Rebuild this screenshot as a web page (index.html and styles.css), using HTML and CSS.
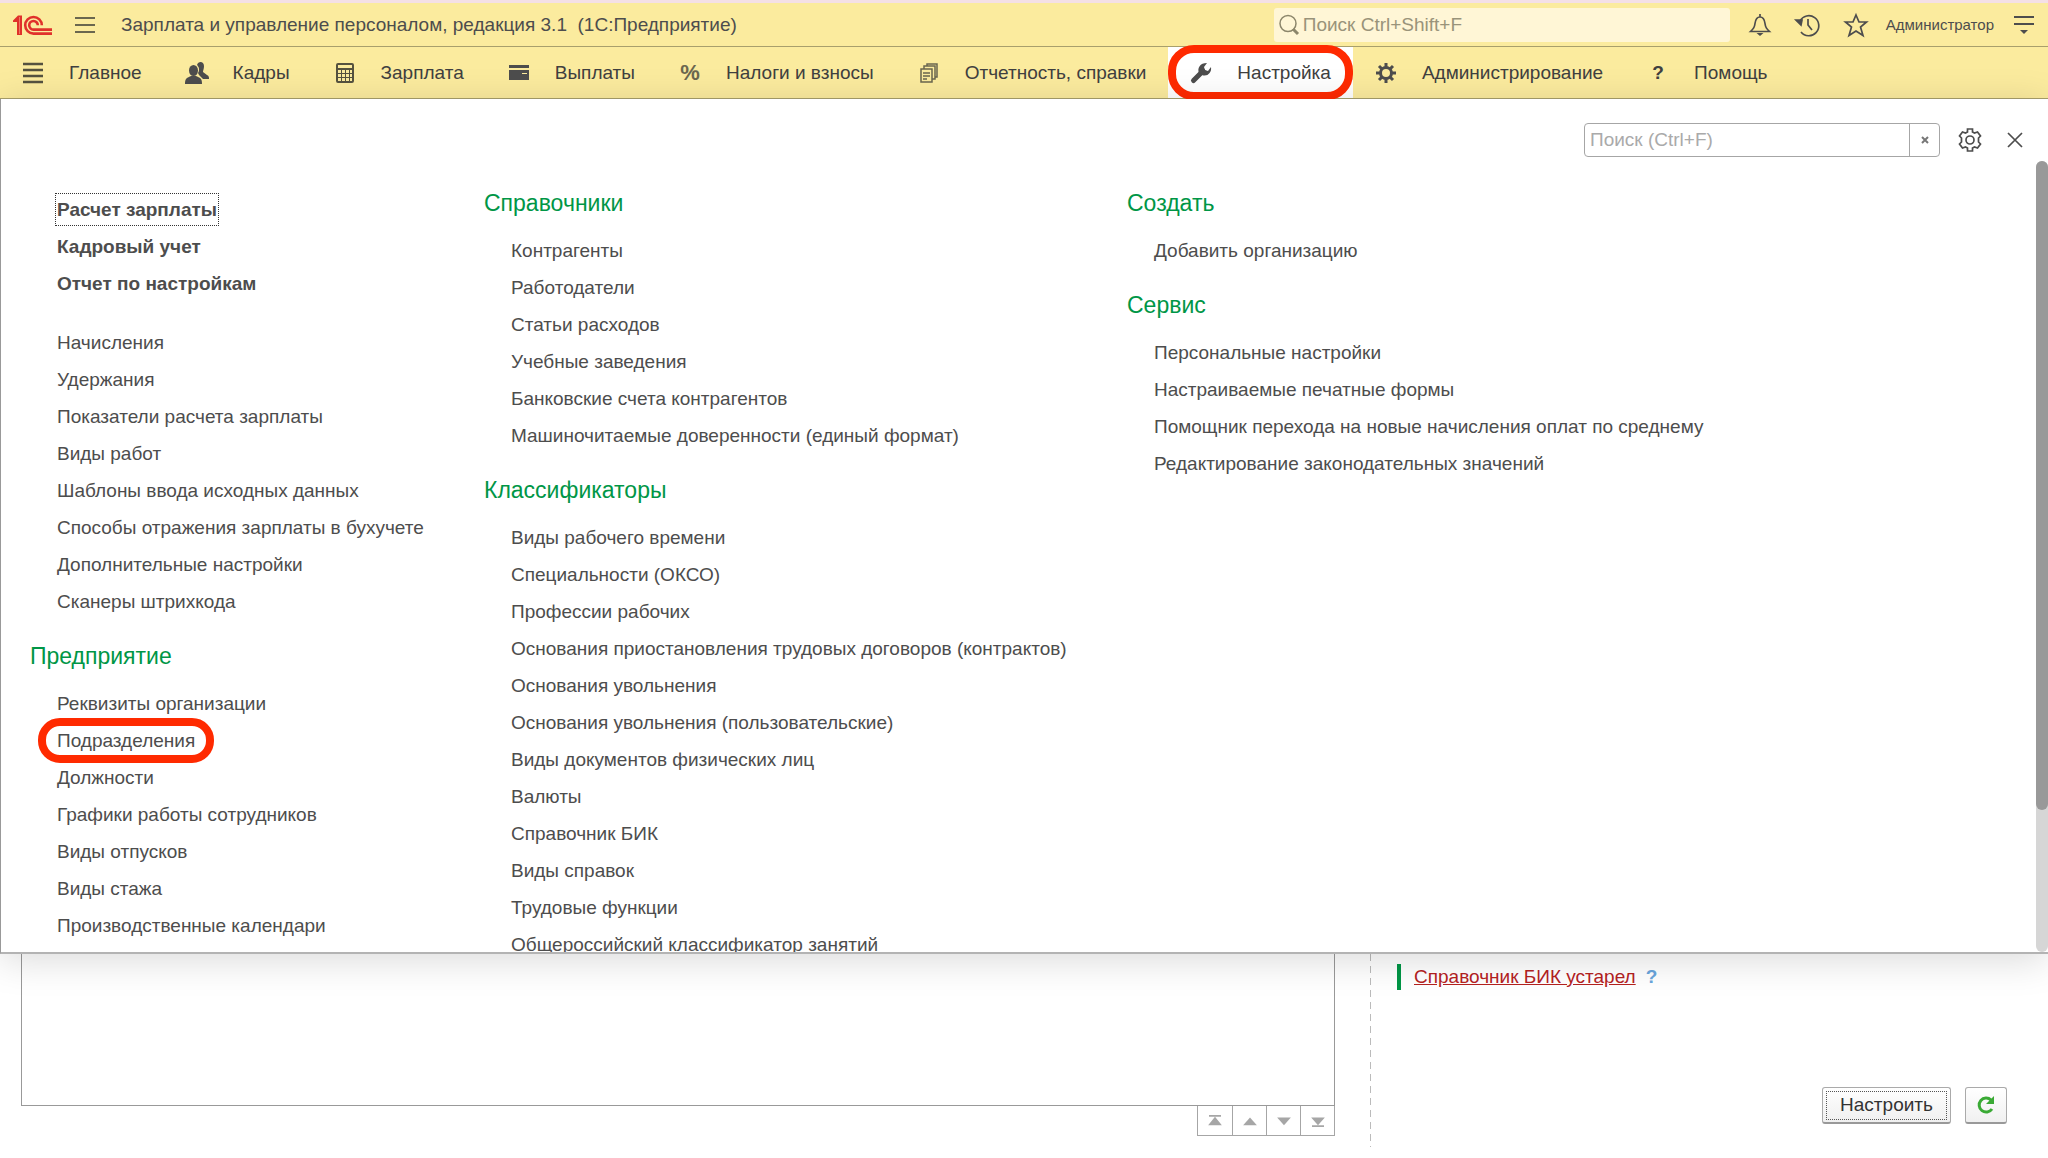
FILE: index.html
```html
<!DOCTYPE html>
<html lang="ru">
<head>
  <meta charset="UTF-8" />
  <meta name="viewport" content="width=device-width, initial-scale=1.0"/>
  <title>Зарплата и управление персоналом</title>
  <link rel="stylesheet" href="styles.css">
</head>
<body>
  <header class="titlebar">
    <svg class="logo" width="40" height="22" viewBox="0 0 40 22" fill="none" stroke="#e0312b">
      <path d="M0 6.500L5 1.500h4V21H4V8H0z" fill="#e0312b" stroke="none"/>
      <path d="M6.500 3v17" stroke="#f3a78a" stroke-width="0.600"/>
      <path d="M39 19.600H20.500a8.300 8.300 0 1 1 8.300-8.300" stroke-width="2.600"/>
      <path d="M39 15.600H20.500a4.300 4.300 0 1 1 4.300-4.300" stroke-width="2.600"/>
    </svg>
    <button class="icon-btn menu-btn" aria-label="Главное меню">
      <svg width="20" height="18" viewBox="0 0 20 18" stroke="#6b674f" stroke-width="2"><path d="M0 2h20M0 9h20M0 16h20"/></svg>
    </button>
    <h1>Зарплата и управление персоналом, редакция 3.1&nbsp; (1С:Предприятие)</h1>
    <label class="global-search">
      <svg width="22" height="22" viewBox="0 0 22 22" fill="none" stroke="#8c866b"><circle cx="10" cy="9.500" r="8" stroke-width="1.500"/><path d="M15 15l5 5" stroke-width="3"/></svg>
      <input type="text" placeholder="Поиск Ctrl+Shift+F" aria-label="Поиск">
    </label>
    <div class="tools">
      <button class="icon-btn" aria-label="Оповещения">
        <svg width="24" height="24" viewBox="0 0 24 24" fill="none" stroke="#4d4d4d" stroke-width="1.700"><path d="M2.500 18.500c3-3 4-4 4.500-8 .5-4 2-6.500 5-6.500s4.500 2.500 5 6.500c.5 4 1.500 5 4.500 8zM12 1v3"/><path d="M8.500 20h7L12 23z" fill="#4d4d4d" stroke="none"/></svg>
      </button>
      <button class="icon-btn" aria-label="История">
        <svg width="24" height="24" viewBox="0 0 24 24" fill="none" stroke="#4d4d4d" stroke-width="1.700"><path d="M4 8a10 10 0 1 1 1 11M12 6v6l4 5"/><path d="M0 7h6l-1 5z" fill="#4d4d4d" stroke="#4d4d4d"/></svg>
      </button>
      <button class="icon-btn" aria-label="Избранное">
        <svg width="24" height="24" viewBox="0 0 24 24" fill="none" stroke="#4d4d4d" stroke-width="1.700"><path d="M12 2l3 7h7.500l-6 5 2.500 8.500-7-4.500-7 4.500L7.500 14l-6-5H9z"/></svg>
      </button>
    </div>
    <a class="user" href="#">Администратор</a>
    <button class="icon-btn" aria-label="Настройка панели">
      <svg width="20" height="20" viewBox="0 0 20 20" stroke="#4d4d4d" stroke-width="2"><path d="M0 2h20M0 9h20"/><path d="M6 15h8l-4 4z" fill="#4d4d4d" stroke="none"/></svg>
    </button>
  </header>

  <nav class="sections">
    <a href="#"><span class="icon"><svg width="20" height="20" viewBox="0 0 20 20" stroke="#55523f" stroke-width="2.500"><path d="M0 1h20M0 7h20M0 13h20M0 19h20"/></svg></span>Главное</a>
    <a href="#"><span class="icon"><svg width="24" height="22" viewBox="0 0 24 22" fill="#4d4d4d"><path d="M12 3c1-4 7-4 7 1 0 3-1 4-1 6l4 3c2 1 2 2 2 4h-6l-4-4-1-2c2-3 1-6-1-8z"/><ellipse cx="8.500" cy="8.500" rx="4.500" ry="5.500"/><path d="M0 22c0-5 1-6 6-8h5c5 2 6 3 6 8z"/></svg></span>Кадры</a>
    <a href="#"><span class="icon"><svg width="18" height="20" viewBox="0 0 18 20" fill="none" stroke="#55523f"><rect x="1" y="1" width="16" height="18" rx="1" stroke-width="2"/><path d="M1 6h16" stroke-width="2"/><path d="M1 10.500h16M1 14.500h16M5.500 6v13M9.500 6v13M13.500 6v13"/></svg></span>Зарплата</a>
    <a href="#"><span class="icon"><svg width="20" height="15" viewBox="0 0 20 15" fill="#4d4d4d"><path d="M0 0h20v3H0zM0 5h20v10H0z"/><path d="M13 8.500h5" stroke="#fbeb9e"/></svg></span>Выплаты</a>
    <a href="#"><b class="icon percent">%</b>Налоги и взносы</a>
    <a href="#"><span class="icon"><svg width="18" height="20" viewBox="0 0 18 20" fill="none" stroke="#6b674f" stroke-width="1.500"><path d="M1 6h11v13H1zM4 6V3h11v13h-3M7 3V1h10v13h-2M3 10h7M3 13h7M3 16h4"/></svg></span>Отчетность, справки</a>
    <a href="#" class="active"><span class="icon"><svg width="22" height="22" viewBox="0 0 22 22"><path d="M3.500 18.500L13 9" stroke="#4d4d4d" stroke-width="5" stroke-linecap="round"/><path d="M9 11c-2-5 1-10 8-10l-3 4 1 3 3 1 3-4c1 6-4 10-9 8z" fill="#4d4d4d"/></svg></span>Настройка</a>
    <a href="#"><span class="icon"><svg width="20" height="20" viewBox="0 0 20 20" fill="none" stroke="#4d4d4d" stroke-width="3"><circle cx="10" cy="10" r="5.500"/><path d="M10 0v4M10 16v4M0 10h4M16 10h4M3 3l3 3M14 14l3 3M3 17l3-3M14 6l3-3"/></svg></span>Администрирование</a>
    <a href="#"><b class="icon">?</b>Помощь</a>
  </nav>

  <section class="panel">
    <div class="panel-tools">
      <div class="panel-search">
        <input type="text" placeholder="Поиск (Ctrl+F)" aria-label="Поиск по разделу">
        <button aria-label="Очистить"><svg width="8" height="8" viewBox="0 0 8 8" stroke="#777" stroke-width="2"><path d="M1 1l6 6M7 1L1 7"/></svg></button>
      </div>
      <button class="icon-btn settings" aria-label="Настройки">
        <svg width="24" height="24" viewBox="0 0 24 24" fill="none" stroke="#4d4d4d" stroke-width="1.700"><circle cx="12" cy="12" r="4"/><path d="M9.500 4V1h5v3l2 1 3-1 3 4-2 2v4l2 2-3 4-3-1-2 1v3h-5v-3l-2-1-3 1-3-4 2-2v-4l-2-2 3-4 3 1z"/></svg>
      </button>
      <button class="icon-btn" aria-label="Закрыть">
        <svg width="14" height="14" viewBox="0 0 14 14" stroke="#4d4d4d" stroke-width="1.700"><path d="M0 0l14 14M14 0L0 14"/></svg>
      </button>
    </div>

    <div class="columns">
      <div class="column first">
        <ul class="main-links">
          <li><a href="#" class="focused">Расчет зарплаты</a></li>
          <li><a href="#">Кадровый учет</a></li>
          <li><a href="#">Отчет по настройкам</a></li>
        </ul>
        <ul>
          <li><a href="#">Начисления</a></li>
          <li><a href="#">Удержания</a></li>
          <li><a href="#">Показатели расчета зарплаты</a></li>
          <li><a href="#">Виды работ</a></li>
          <li><a href="#">Шаблоны ввода исходных данных</a></li>
          <li><a href="#">Способы отражения зарплаты в бухучете</a></li>
          <li><a href="#">Дополнительные настройки</a></li>
          <li><a href="#">Сканеры штрихкода</a></li>
        </ul>
        <h2>Предприятие</h2>
        <ul>
          <li><a href="#">Реквизиты организации</a></li>
          <li><a href="#" class="marked">Подразделения</a></li>
          <li><a href="#">Должности</a></li>
          <li><a href="#">Графики работы сотрудников</a></li>
          <li><a href="#">Виды отпусков</a></li>
          <li><a href="#">Виды стажа</a></li>
          <li><a href="#">Производственные календари</a></li>
        </ul>
      </div>

      <div class="column second">
        <h2>Справочники</h2>
        <ul>
          <li><a href="#">Контрагенты</a></li>
          <li><a href="#">Работодатели</a></li>
          <li><a href="#">Статьи расходов</a></li>
          <li><a href="#">Учебные заведения</a></li>
          <li><a href="#">Банковские счета контрагентов</a></li>
          <li><a href="#">Машиночитаемые доверенности (единый формат)</a></li>
        </ul>
        <h2>Классификаторы</h2>
        <ul>
          <li><a href="#">Виды рабочего времени</a></li>
          <li><a href="#">Специальности (ОКСО)</a></li>
          <li><a href="#">Профессии рабочих</a></li>
          <li><a href="#">Основания приостановления трудовых договоров (контрактов)</a></li>
          <li><a href="#">Основания увольнения</a></li>
          <li><a href="#">Основания увольнения (пользовательские)</a></li>
          <li><a href="#">Виды документов физических лиц</a></li>
          <li><a href="#">Валюты</a></li>
          <li><a href="#">Справочник БИК</a></li>
          <li><a href="#">Виды справок</a></li>
          <li><a href="#">Трудовые функции</a></li>
          <li><a href="#">Общероссийский классификатор занятий</a></li>
        </ul>
      </div>

      <div class="column third">
        <h2>Создать</h2>
        <ul>
          <li><a href="#">Добавить организацию</a></li>
        </ul>
        <h2>Сервис</h2>
        <ul>
          <li><a href="#">Персональные настройки</a></li>
          <li><a href="#">Настраиваемые печатные формы</a></li>
          <li><a href="#">Помощник перехода на новые начисления оплат по среднему</a></li>
          <li><a href="#">Редактирование законодательных значений</a></li>
        </ul>
      </div>
      <div class="scrollbar"><div class="thumb"></div></div>
    </div>
  </section>

  <main class="desktop">
    <div class="list-side">
      <div class="list-box"></div>
      <div class="pager">
        <button aria-label="В начало"><svg width="14" height="12" viewBox="0 0 16 14" fill="#a6a6a6"><path d="M1 0h14v2H1zM8 2l8 10H0z"/></svg></button>
        <button aria-label="Вверх"><svg width="14" height="12" viewBox="0 0 16 14" fill="#a6a6a6"><path d="M8 3l8 9H0z"/></svg></button>
        <button aria-label="Вниз"><svg width="14" height="12" viewBox="0 0 16 14" fill="#a6a6a6"><path d="M8 12l8-9H0z"/></svg></button>
        <button aria-label="В конец"><svg width="14" height="12" viewBox="0 0 16 14" fill="#a6a6a6"><path d="M1 12h14v2H1zM8 12l8-9H0z"/></svg></button>
      </div>
    </div>
    <div class="info-side">
      <div class="notice"><a href="#">Справочник БИК устарел</a><button class="help">?</button></div>
      <div class="actions">
        <button class="btn setup">Настроить</button>
        <button class="btn refresh" aria-label="Обновить"><svg width="20" height="20" viewBox="0 0 20 20"><path d="M15 5a7 7 0 1 0 1 9" fill="none" stroke="#3aaa35" stroke-width="3"/><path d="M18 1v8h-8z" fill="#3aaa35"/></svg></button>
      </div>
    </div>
  </main>
</body>
</html>
```
FILE: styles.css
```css
* {
  box-sizing: border-box;
}

body {
  margin: 0;
  height: 100vh;
  display: flex;
  flex-direction: column;
  overflow: hidden;
  font-family: "Liberation Sans", Arial, sans-serif;
  font-size: 19px;
  color: #4d4d4d;
  background: #fff;
}

a {
  color: inherit;
  text-decoration: none;
}

button, input {
  font: inherit;
  color: inherit;
}

svg {
  display: block;
  flex: none;
  overflow: visible;
}

ul {
  list-style: none;
  margin: 0;
  padding: 0;
}

.icon-btn {
  padding: 0;
  border: none;
  background: none;
}

/* title bar */
.titlebar {
  flex: none;
  display: flex;
  align-items: center;
  height: 47px;
  padding: 0 14px 0 13px;
  background: #fbeb9e;
  border-top: 3px solid #f4e0e6;
  border-bottom: 1px solid #a89f6c;
}

.menu-btn {
  margin: 0 26px 0 22px;
}

h1 {
  flex: 1;
  margin: 0;
  font-size: 19px;
  font-weight: normal;
  white-space: nowrap;
}

.global-search {
  display: flex;
  align-items: center;
  width: 456px;
  height: 34px;
  padding: 0 4px;
  background: #fff6d6;
  border-radius: 3px;
}

.global-search input {
  flex: 1;
  min-width: 0;
  padding: 0 3px;
  border: none;
  background: none;
}

.global-search input::placeholder {
  color: #99937a;
}

.tools {
  display: flex;
  gap: 24px;
  margin: 0 18px;
}

.user {
  margin-right: 20px;
  font-size: 15px;
}

/* sections */
.sections {
  flex: none;
  display: flex;
  height: 52px;
  background: #fbeb9e;
  border-bottom: 1px solid #a89f6c;
}

.sections a {
  display: flex;
  align-items: center;
  gap: 25px;
  padding: 0 22px;
  white-space: nowrap;
  color: #404040;
}

.sections .active {
  position: relative;
  background: #fff;
}

.sections .active::after {
  content: "";
  position: absolute;
  inset: -2px 0;
  border: 8px solid #ff2a00;
  border-radius: 26px;
}

.icon {
  display: flex;
  justify-content: center;
  width: 22px;
}

.percent {
  font-size: 22px;
  color: #6b674f;
}

/* function panel */
.panel {
  position: relative;
  z-index: 1;
  flex: 1;
  min-height: 0;
  display: flex;
  flex-direction: column;
  background: #fff;
  border-left: 1px solid #999;
  border-bottom: 2px solid #b3b3b3;
  box-shadow: 0 6px 36px rgba(0,0,0,0.15);
}

.panel-tools {
  flex: none;
  display: flex;
  align-items: center;
  justify-content: flex-end;
  gap: 18px;
  padding: 24px 26px 4px 0;
}

.panel-search {
  display: flex;
  width: 356px;
  height: 34px;
  border: 1px solid #a6a6a6;
  border-radius: 4px;
}

.panel-search input {
  flex: 1;
  min-width: 0;
  padding: 0 5px;
  border: none;
  background: none;
}

.panel-search input::placeholder {
  color: #aaa;
}

.panel-search button {
  display: grid;
  place-items: center;
  width: 30px;
  padding: 0;
  border: none;
  border-left: 1px solid #a6a6a6;
  background: none;
}

.settings {
  margin-right: 8px;
}

.columns {
  flex: 1;
  min-height: 0;
  display: flex;
  overflow: hidden;
}

.column {
  flex: none;
  padding: 24px 0 0 29px;
}

.column li {
  padding-left: 27px;
  line-height: 37px;
  white-space: nowrap;
}

.column.first {
  width: 454px;
  padding-top: 30px;
}

.second {
  width: 643px;
}

.third {
  flex: 1;
}

.column h2 {
  margin: 0 0 11px;
  font-size: 23px;
  font-weight: normal;
  line-height: 36px;
  color: #009646;
}

.column ul + h2 {
  margin-top: 18px;
}

.main-links {
  margin-bottom: 22px;
  font-weight: bold;
}

.focused {
  padding: 4px 0;
  outline: 1px dotted #333;
  outline-offset: 1px;
}

.marked {
  position: relative;
}

.marked::after {
  content: "";
  position: absolute;
  inset: -12px -19px;
  border: 8px solid #ff2a00;
  border-radius: 22px;
}

.scrollbar {
  width: 12px;
  background: #d6d6d6;
  border-radius: 6px;
}

.thumb {
  height: 82%;
  background: #999;
  border-radius: 6px;
}

/* start page */
.desktop {
  flex: 0 0 204px;
  display: flex;
  padding: 0 41px 11px 21px;
}

.list-side {
  flex: 0 0 1314px;
  display: flex;
  flex-direction: column;
  align-items: flex-end;
  padding-bottom: 11px;
}

.list-box {
  flex: 1;
  align-self: stretch;
  border: 1px solid #999;
  border-top: none;
}

.pager {
  display: flex;
  border: 1px solid #a6a6a6;
  border-top: none;
}

.pager button {
  display: grid;
  place-items: center;
  width: 34px;
  height: 29px;
  padding: 0;
  border: none;
  background: #fff;
}

.pager button + button {
  border-left: 1px solid #a6a6a6;
}

.info-side {
  flex: 1;
  display: flex;
  flex-direction: column;
  justify-content: space-between;
  margin-left: 35px;
  padding: 10px 0 23px 27px;
  background: repeating-linear-gradient(#bbb 0 7px, transparent 7px 12px) left / 1px 100% no-repeat;
}

.notice {
  display: flex;
  align-items: center;
  height: 26px;
  padding-left: 13px;
  border-left: 4px solid #009646;
}

.notice a {
  color: #b5221f;
  text-decoration: underline;
}

.help {
  padding: 0 10px;
  border: none;
  background: none;
  font-weight: bold;
  color: #6aa5dc;
}

.actions {
  display: flex;
  justify-content: flex-end;
  gap: 14px;
}

.btn {
  display: grid;
  place-items: center;
  height: 37px;
  padding: 0;
  border: 1px solid #aaa;
  border-bottom: 2px solid #999;
  border-radius: 3px;
  background: linear-gradient(#fff, #f0f0f0);
}

.setup {
  width: 129px;
  color: #333;
  outline: 1px dotted #555;
  outline-offset: -5px;
}

.refresh {
  width: 42px;
}
```
